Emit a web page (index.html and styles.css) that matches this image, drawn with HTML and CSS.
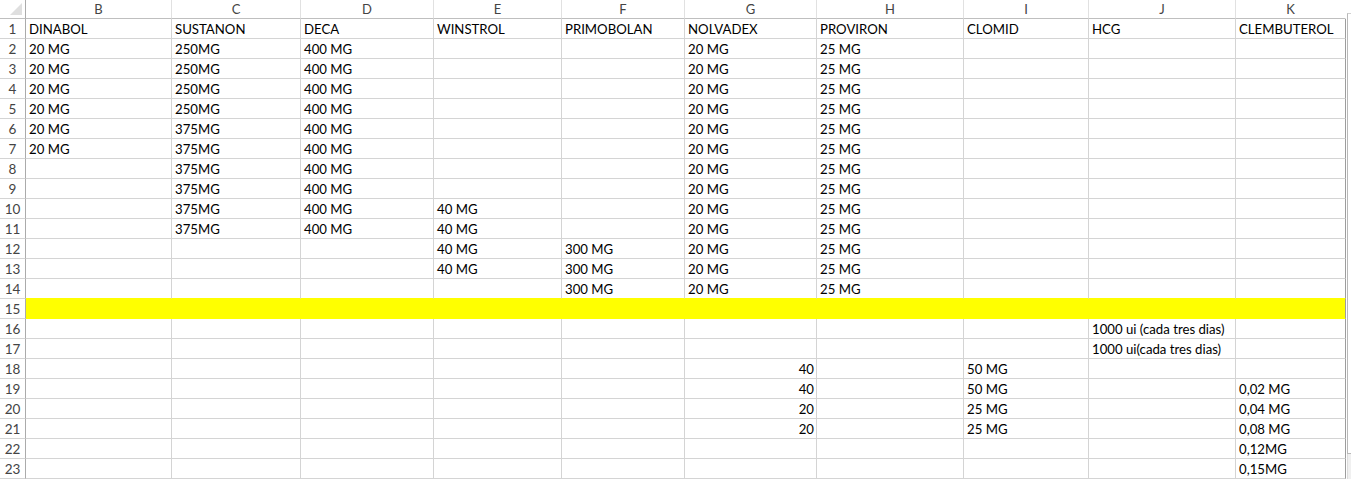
FILE: index.html
```html
<!DOCTYPE html>
<html lang="es">
<head>
<meta charset="utf-8">
<title>Hoja</title>
<link rel="stylesheet" href="styles.css">
</head>
<body>
<div class="sheet">
  <div class="grid">
    <div class="r hd">
      <div class="c corner"><svg width="26" height="18" viewBox="0 0 26 18"><polygon points="22,3 22,15 10,15" fill="#dfdfdf"/></svg></div>
      <div class="c">B</div><div class="c">C</div><div class="c">D</div><div class="c">E</div><div class="c">F</div><div class="c">G</div><div class="c">H</div><div class="c">I</div><div class="c">J</div><div class="c last">K</div>
    </div>
    <div class="r"><div class="c rh">1</div><div class="c">DINABOL</div><div class="c">SUSTANON</div><div class="c">DECA</div><div class="c">WINSTROL</div><div class="c">PRIMOBOLAN</div><div class="c">NOLVADEX</div><div class="c">PROVIRON</div><div class="c">CLOMID</div><div class="c">HCG</div><div class="c last">CLEMBUTEROL</div></div>
    <div class="r"><div class="c rh">2</div><div class="c">20 MG</div><div class="c">250MG</div><div class="c">400 MG</div><div class="c"></div><div class="c"></div><div class="c">20 MG</div><div class="c">25 MG</div><div class="c"></div><div class="c"></div><div class="c last"></div></div>
    <div class="r"><div class="c rh">3</div><div class="c">20 MG</div><div class="c">250MG</div><div class="c">400 MG</div><div class="c"></div><div class="c"></div><div class="c">20 MG</div><div class="c">25 MG</div><div class="c"></div><div class="c"></div><div class="c last"></div></div>
    <div class="r"><div class="c rh">4</div><div class="c">20 MG</div><div class="c">250MG</div><div class="c">400 MG</div><div class="c"></div><div class="c"></div><div class="c">20 MG</div><div class="c">25 MG</div><div class="c"></div><div class="c"></div><div class="c last"></div></div>
    <div class="r"><div class="c rh">5</div><div class="c">20 MG</div><div class="c">250MG</div><div class="c">400 MG</div><div class="c"></div><div class="c"></div><div class="c">20 MG</div><div class="c">25 MG</div><div class="c"></div><div class="c"></div><div class="c last"></div></div>
    <div class="r"><div class="c rh">6</div><div class="c">20 MG</div><div class="c">375MG</div><div class="c">400 MG</div><div class="c"></div><div class="c"></div><div class="c">20 MG</div><div class="c">25 MG</div><div class="c"></div><div class="c"></div><div class="c last"></div></div>
    <div class="r"><div class="c rh">7</div><div class="c">20 MG</div><div class="c">375MG</div><div class="c">400 MG</div><div class="c"></div><div class="c"></div><div class="c">20 MG</div><div class="c">25 MG</div><div class="c"></div><div class="c"></div><div class="c last"></div></div>
    <div class="r"><div class="c rh">8</div><div class="c"></div><div class="c">375MG</div><div class="c">400 MG</div><div class="c"></div><div class="c"></div><div class="c">20 MG</div><div class="c">25 MG</div><div class="c"></div><div class="c"></div><div class="c last"></div></div>
    <div class="r"><div class="c rh">9</div><div class="c"></div><div class="c">375MG</div><div class="c">400 MG</div><div class="c"></div><div class="c"></div><div class="c">20 MG</div><div class="c">25 MG</div><div class="c"></div><div class="c"></div><div class="c last"></div></div>
    <div class="r"><div class="c rh">10</div><div class="c"></div><div class="c">375MG</div><div class="c">400 MG</div><div class="c">40 MG</div><div class="c"></div><div class="c">20 MG</div><div class="c">25 MG</div><div class="c"></div><div class="c"></div><div class="c last"></div></div>
    <div class="r"><div class="c rh">11</div><div class="c"></div><div class="c">375MG</div><div class="c">400 MG</div><div class="c">40 MG</div><div class="c"></div><div class="c">20 MG</div><div class="c">25 MG</div><div class="c"></div><div class="c"></div><div class="c last"></div></div>
    <div class="r"><div class="c rh">12</div><div class="c"></div><div class="c"></div><div class="c"></div><div class="c">40 MG</div><div class="c">300 MG</div><div class="c">20 MG</div><div class="c">25 MG</div><div class="c"></div><div class="c"></div><div class="c last"></div></div>
    <div class="r"><div class="c rh">13</div><div class="c"></div><div class="c"></div><div class="c"></div><div class="c">40 MG</div><div class="c">300 MG</div><div class="c">20 MG</div><div class="c">25 MG</div><div class="c"></div><div class="c"></div><div class="c last"></div></div>
    <div class="r above-fill"><div class="c rh">14</div><div class="c"></div><div class="c"></div><div class="c"></div><div class="c"></div><div class="c">300 MG</div><div class="c">20 MG</div><div class="c">25 MG</div><div class="c"></div><div class="c"></div><div class="c last"></div></div>
    <div class="r fill"><div class="c rh">15</div><div class="c"></div><div class="c"></div><div class="c"></div><div class="c"></div><div class="c"></div><div class="c"></div><div class="c"></div><div class="c"></div><div class="c"></div><div class="c last"></div></div>
    <div class="r"><div class="c rh">16</div><div class="c"></div><div class="c"></div><div class="c"></div><div class="c"></div><div class="c"></div><div class="c"></div><div class="c"></div><div class="c"></div><div class="c">1000 ui (cada tres dias)</div><div class="c last"></div></div>
    <div class="r"><div class="c rh">17</div><div class="c"></div><div class="c"></div><div class="c"></div><div class="c"></div><div class="c"></div><div class="c"></div><div class="c"></div><div class="c"></div><div class="c">1000 ui(cada tres dias)</div><div class="c last"></div></div>
    <div class="r"><div class="c rh">18</div><div class="c"></div><div class="c"></div><div class="c"></div><div class="c"></div><div class="c"></div><div class="c num">40</div><div class="c"></div><div class="c">50 MG</div><div class="c"></div><div class="c last"></div></div>
    <div class="r"><div class="c rh">19</div><div class="c"></div><div class="c"></div><div class="c"></div><div class="c"></div><div class="c"></div><div class="c num">40</div><div class="c"></div><div class="c">50 MG</div><div class="c"></div><div class="c last">0,02 MG</div></div>
    <div class="r"><div class="c rh">20</div><div class="c"></div><div class="c"></div><div class="c"></div><div class="c"></div><div class="c"></div><div class="c num">20</div><div class="c"></div><div class="c">25 MG</div><div class="c"></div><div class="c last">0,04 MG</div></div>
    <div class="r"><div class="c rh">21</div><div class="c"></div><div class="c"></div><div class="c"></div><div class="c"></div><div class="c"></div><div class="c num">20</div><div class="c"></div><div class="c">25 MG</div><div class="c"></div><div class="c last">0,08 MG</div></div>
    <div class="r"><div class="c rh">22</div><div class="c"></div><div class="c"></div><div class="c"></div><div class="c"></div><div class="c"></div><div class="c"></div><div class="c"></div><div class="c"></div><div class="c"></div><div class="c last">0,12MG</div></div>
    <div class="r"><div class="c rh">23</div><div class="c"></div><div class="c"></div><div class="c"></div><div class="c"></div><div class="c"></div><div class="c"></div><div class="c"></div><div class="c"></div><div class="c"></div><div class="c last">0,15MG</div></div>
  </div>
  <div class="vscroll"><div class="track"></div><div class="foot"></div></div>
</div>
</body>
</html>
```

FILE: styles.css
```css
html, body {
  margin: 0;
  padding: 0;
  background: #ffffff;
  overflow: hidden;
}

.sheet {
  display: flex;
  width: 1351px;
  height: 479px;
  font-family: Lato, "Liberation Sans", sans-serif;
  font-size: 13.2px;
  color: #000000;
}

.grid {
  display: flex;
  flex-direction: column;
  width: 1346px;
}

.r {
  display: grid;
  grid-template-columns: 26px 146px 129px 133px 128px 123px 132px 147px 125px 147px 110px;
  height: 20px;
}

.c {
  box-sizing: border-box;
  border-right: 1px solid #d4d4d4;
  border-bottom: 1px solid #d4d4d4;
  padding: 1px 3px 0;
  line-height: 18px;
  white-space: nowrap;
  overflow: visible;
}

.c.last {
  border-right-color: #9d9d9d;
}

.c.num {
  text-align: right;
  padding-right: 2px;
}

.hd {
  height: 19px;
}

.hd .c {
  text-align: center;
  color: #444444;
  font-size: 13px;
  line-height: 18px;
  padding-top: 0;
  border-right-color: #e1e1e1;
  border-bottom-color: #bfbfbf;
}

.hd .c.last {
  border-right-color: #ffffff;
}

.hd .corner {
  padding: 0;
  border-right-color: #ababab;
  line-height: 0;
}

.rh {
  text-align: center;
  padding-left: 0;
  padding-right: 0;
  color: #444444;
  font-size: 13.5px;
  border-right-color: #ababab;
}

.above-fill .c:not(.rh) {
  border-bottom-color: #ffff00;
}

.fill .c:not(.rh) {
  background: #ffff00;
  border-right-color: #ffff00;
  border-bottom-color: #ffff00;
}

.fill .c.last {
  border-right-color: #9d9d9d;
}

.vscroll {
  display: flex;
  flex-direction: column;
  width: 5px;
  padding-left: 1px;
}

.track {
  border-left: 1px solid #b9b9b9;
  border-top: 1px solid #d0d0d0;
  margin-top: 13px;
  border-bottom: 1px solid #b9b9b9;
  box-sizing: border-box;
  height: 441px;
}

.foot {
  flex: 1;
  background: #f0f0f0;
  border-left: 1px solid #dcdcdc;
}
```
